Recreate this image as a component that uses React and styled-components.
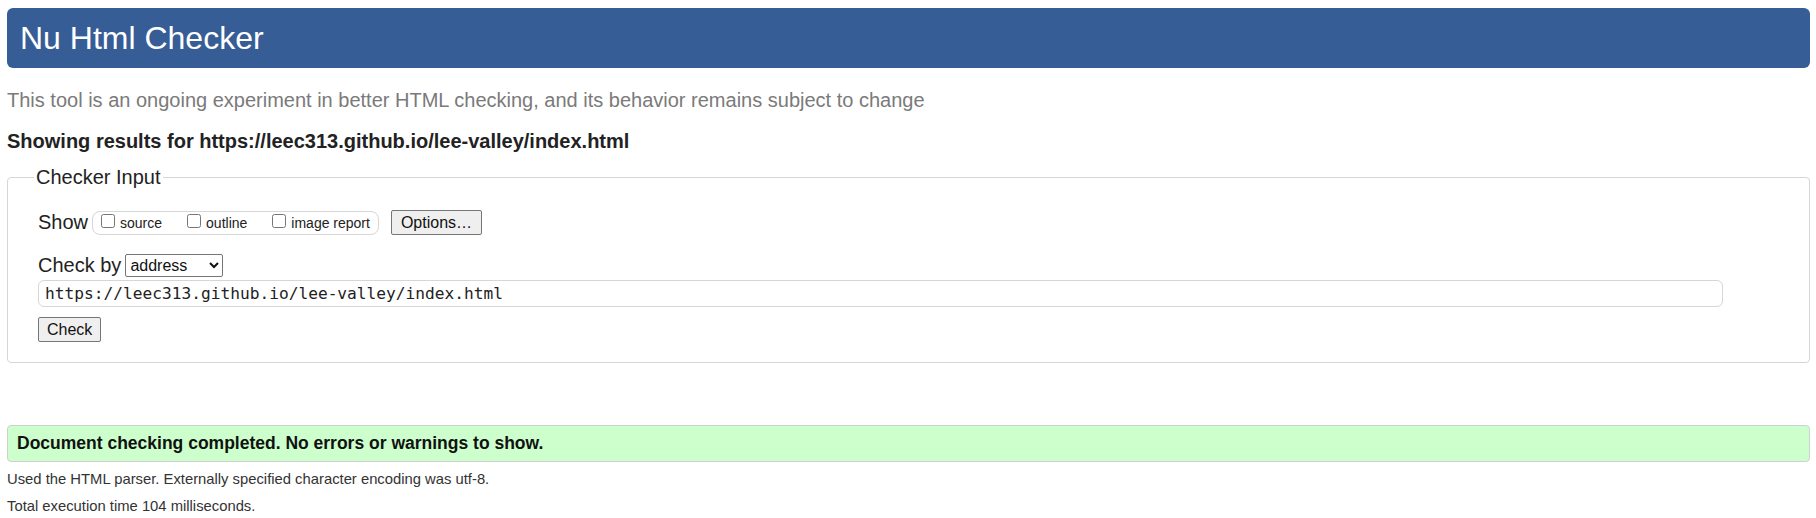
import React from "react";
import styled, { createGlobalStyle } from "styled-components";

const GlobalStyle = createGlobalStyle`
  html, body {
    margin: 0;
    padding: 0;
    background: #fff;
  }
  body {
    font-family: "Liberation Sans", Arial, sans-serif;
    color: #222;
  }
`;

const Page = styled.div`
  padding: 8px 6px 0 7px;
`;

const Header = styled.h1`
  margin: 0;
  height: 60px;
  line-height: 60px;
  padding: 0 13px;
  background: #365d95;
  border-radius: 6px;
  color: #fff;
  font-size: 32px;
  font-weight: normal;
`;

const Intro = styled.p`
  margin: 20px 0 0 0;
  font-size: 20px;
  line-height: 24px;
  color: #7a7a7a;
`;

const Showing = styled.h2`
  margin: 17px 0 0 0;
  font-size: 20px;
  line-height: 24px;
  font-weight: bold;
  color: #222;
`;

const Fieldset = styled.fieldset`
  margin: 13px 0 0 0;
  padding: 21px 30px 20px 30px;
  border: 1px solid #d6d6d6;
  border-radius: 4px;
  min-width: 0;
`;

const Legend = styled.legend`
  padding: 0 2px;
  margin-left: -4px;
  font-size: 20px;
  color: #222;
`;

const Row = styled.div`
  display: flex;
  align-items: center;
  margin-top: ${(p) => p.$top || 0}px;
  font-size: 20px;
`;

const Label = styled.span`
  font-size: 20px;
  margin-right: ${(p) => p.$right || 0}px;
`;

const Pill = styled.div`
  display: flex;
  align-items: center;
  gap: 25px;
  height: 22px;
  padding: 0 8px 0 8px;
  border: 1px solid #d6d6d6;
  border-radius: 8px;
`;

const CheckOpt = styled.label`
  display: flex;
  align-items: flex-end;
  gap: 5px;
  font-size: 14px;
  color: #222;
  input {
    margin: 0;
    width: 14px;
    height: 14px;
    position: relative;
    top: -3px;
  }
`;

const Button = styled.button`
  font-family: "Liberation Sans", Arial, sans-serif;
  font-size: 16px;
  color: #111;
  height: 25px;
  margin-left: ${(p) => p.$left || 0}px;
  padding: 0 ${(p) => p.$pad || 8}px;
  background: #efefef;
  border: 1px solid #767676;
  border-radius: 2px;
`;

const Select = styled.select`
  font-family: "Liberation Sans", Arial, sans-serif;
  font-size: 16px;
  color: #111;
  height: 23px;
  width: 98px;
  margin-left: 4px;
  border: 1px solid #767676;
  border-radius: 2px;
  background: #fff;
`;

const UrlInput = styled.input`
  display: block;
  box-sizing: border-box;
  width: 1685px;
  height: 27px;
  margin-top: 3px;
  padding: 0 6px;
  font-family: "DejaVu Sans Mono", monospace;
  font-size: 16.2px;
  color: #222;
  border: 1px solid #d6d6d6;
  border-radius: 6px;
  outline: none;
`;

const Success = styled.div`
  margin-top: 62px;
  height: 37px;
  line-height: 35px;
  padding: 0 9px;
  background: #ccffcc;
  border: 1px solid #d0d0d0;
  border-radius: 4px;
  box-sizing: border-box;
  font-size: 17.5px;
  font-weight: bold;
  color: #111;
`;

const Note = styled.p`
  margin: ${(p) => p.$top}px 0 0 0;
  font-size: 14.8px;
  line-height: 18px;
  color: #333;
`;

export default function App() {
  return (
    <>
      <GlobalStyle />
      <Page>
        <Header>Nu Html Checker</Header>
        <Intro>
          This tool is an ongoing experiment in better HTML checking, and its
          behavior remains subject to change
        </Intro>
        <Showing>
          Showing results for https://leec313.github.io/lee-valley/index.html
        </Showing>
        <Fieldset>
          <Legend>Checker Input</Legend>
          <Row>
            <Label $right={4}>Show</Label>
            <Pill>
              <CheckOpt>
                <input type="checkbox" />
                source
              </CheckOpt>
              <CheckOpt>
                <input type="checkbox" />
                outline
              </CheckOpt>
              <CheckOpt>
                <input type="checkbox" />
                image report
              </CheckOpt>
            </Pill>
            <Button $pad={9} $left={12}>
              Options…
            </Button>
          </Row>
          <Row $top={19}>
            <Label>Check by</Label>
            <Select defaultValue="address">
              <option value="address">address</option>
              <option value="file">file upload</option>
              <option value="text">text input</option>
            </Select>
          </Row>
          <UrlInput
            type="url"
            defaultValue="https://leec313.github.io/lee-valley/index.html"
          />
          <Row $top={10}>
            <Button>Check</Button>
          </Row>
        </Fieldset>
        <Success>Document checking completed. No errors or warnings to show.</Success>
        <Note $top={8}>
          Used the HTML parser. Externally specified character encoding was
          utf-8.
        </Note>
        <Note $top={9}>Total execution time 104 milliseconds.</Note>
      </Page>
    </>
  );
}
